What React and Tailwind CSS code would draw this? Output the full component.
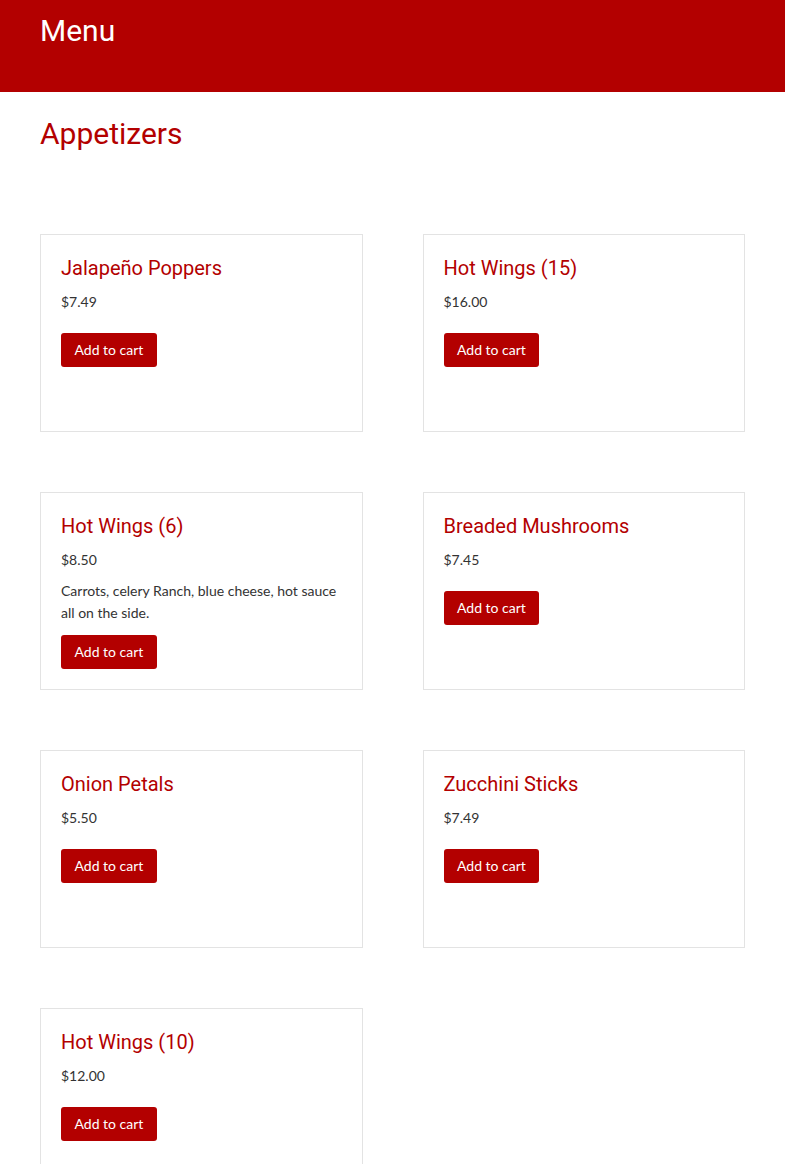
// App.jsx
const items = [
  { name: "Jalapeño Poppers", price: "$7.49" },
  { name: "Hot Wings (15)", price: "$16.00" },
  {
    name: "Hot Wings (6)",
    price: "$8.50",
    desc: "Carrots, celery Ranch, blue cheese, hot sauce all on the side.",
  },
  { name: "Breaded Mushrooms", price: "$7.45" },
  { name: "Onion Petals", price: "$5.50" },
  { name: "Zucchini Sticks", price: "$7.49" },
  { name: "Hot Wings (10)", price: "$12.00" },
];

function MenuCard({ item }) {
  return (
    <div className="flex min-h-[198px] flex-col items-start border border-[#e3e3e3] bg-white px-5 pt-[21px] pb-5">
      <h3 className="font-['Roboto'] text-[20px] leading-6 text-[#b30000]">
        {item.name}
      </h3>
      <p className="mt-3 text-[14px] leading-5 text-[#333333]">{item.price}</p>
      {item.desc && (
        <p className="mt-[10px] text-[14px] leading-[22px] text-[#333333]">
          {item.desc}
        </p>
      )}
      <button
        className={`rounded-[3px] bg-[#b30000] px-[13.5px] py-[7px] text-[14px] leading-5 text-white ${
          item.desc ? "mt-[11px]" : "mt-[21px]"
        }`}
      >
        Add to cart
      </button>
    </div>
  );
}

export default function App() {
  return (
    <div className="min-h-screen bg-white font-['Lato',sans-serif]">
      {/* header bar */}
      <header className="h-[92px] bg-[#b30000] px-10 pt-[13px]">
        <h1 className="font-['Roboto'] text-[30px] leading-[36px] text-white">Menu</h1>
      </header>

      <main className="px-10">
        <h2 className="mt-6 font-['Roboto'] text-[30px] leading-[36px] text-[#b30000]">
          Appetizers
        </h2>

        <div className="mt-[82px] grid grid-cols-2 gap-[60px]">
          {items.map((item) => (
            <MenuCard key={item.name} item={item} />
          ))}
        </div>
      </main>
    </div>
  );
}
